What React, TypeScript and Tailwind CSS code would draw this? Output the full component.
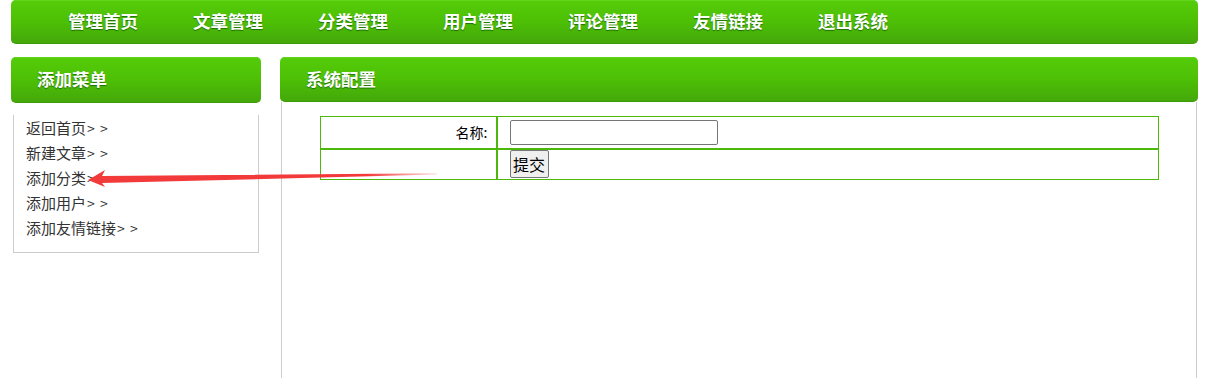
import React from 'react';

const navItems = ['管理首页', '文章管理', '分类管理', '用户管理', '评论管理', '友情链接', '退出系统'];
const menuItems = ['返回首页', '新建文章', '添加分类', '添加用户', '添加友情链接'];

const greenBar =
  'bg-gradient-to-b from-[#55cc0a] via-[#4dc005] to-[#44a80a] border-b border-[#3d9a08] shadow-[inset_0_1px_0_#62d41a]';
const titleShadow = '[text-shadow:0_1px_1px_rgba(0,60,0,0.6)]';

export default function App() {
  return (
    <div className="relative h-[378px] w-[1211px] overflow-hidden bg-white font-['Noto_Sans_CJK_SC','Liberation_Sans',sans-serif]">
      <div className="px-[11px]">
        {/* Top nav */}
        <div className={`flex h-[44px] w-[1187px] items-center rounded-[5px] pl-[57px] ${greenBar}`}>
          {navItems.map((item) => (
            <span key={item} className={`w-[125px] text-[17.5px] font-bold text-white ${titleShadow}`}>
              {item}
            </span>
          ))}
        </div>

        <div className="mt-[13px] flex gap-[19px]">
          {/* Sidebar */}
          <div className="w-[250px]">
            <div className={`flex h-[46px] items-center rounded-[5px] pl-[26px] text-[17.5px] font-bold text-white ${greenBar} ${titleShadow}`}>
              添加菜单
            </div>
            <ul className="mx-[2px] mt-[12px] border-x border-b border-[#cccccc] pl-[12px] pt-[1px] pb-[11px] text-[15px] text-[#333]">
              {menuItems.map((item) => (
                <li key={item} className="flex h-[25px] items-center">
                  {item}
                  <span className="ml-[1px] text-[14px] tracking-[1px]">&gt; &gt;</span>
                </li>
              ))}
            </ul>
          </div>

          {/* Main */}
          <div className="flex w-[918px] flex-col">
            <div className={`flex h-[45px] items-center rounded-[5px] pl-[26px] text-[17.5px] font-bold text-white ${greenBar} ${titleShadow}`}>
              系统配置
            </div>
            <div className="mx-[1px] h-[300px] border-x border-[#cccccc] pl-[38px] pt-[14px]">
              <table className="w-[839px] border-collapse border border-[#4cb80b] text-[14px] text-black">
                <tbody>
                  <tr className="h-[32px] border-b-2 border-[#4cb80b]">
                    <td className="w-[176px] border-r-2 border-[#4cb80b] pr-[8px] text-right">名称:</td>
                    <td className="pl-[12px]">
                      <input className="block h-[25px] w-[208px] rounded-[2px] border border-[#767676] bg-white" />
                    </td>
                  </tr>
                  <tr className="h-[31px]">
                    <td className="border-r-2 border-[#4cb80b]"></td>
                    <td className="pl-[12px]">
                      <button className="block h-[28px] w-[39px] rounded-[2px] border border-[#767676] bg-[#efefef] text-[16px] leading-none text-black">
                        提交
                      </button>
                    </td>
                  </tr>
                </tbody>
              </table>
            </div>
          </div>
        </div>
      </div>

      {/* Red annotation arrow */}
      <svg className="pointer-events-none absolute left-0 top-0" width="1211" height="378">
        <defs>
          <linearGradient id="fade" x1="88" y1="0" x2="437" y2="0" gradientUnits="userSpaceOnUse">
            <stop offset="0" stopColor="#f23a3a" />
            <stop offset="0.8" stopColor="#f23a3a" />
            <stop offset="1" stopColor="#f23a3a" stopOpacity="0.15" />
          </linearGradient>
        </defs>
        <polygon
          points="88,180 105,170 102,176 437,173.2 437,174.6 102,183 105,187"
          fill="url(#fade)"
        />
      </svg>
    </div>
  );
}
